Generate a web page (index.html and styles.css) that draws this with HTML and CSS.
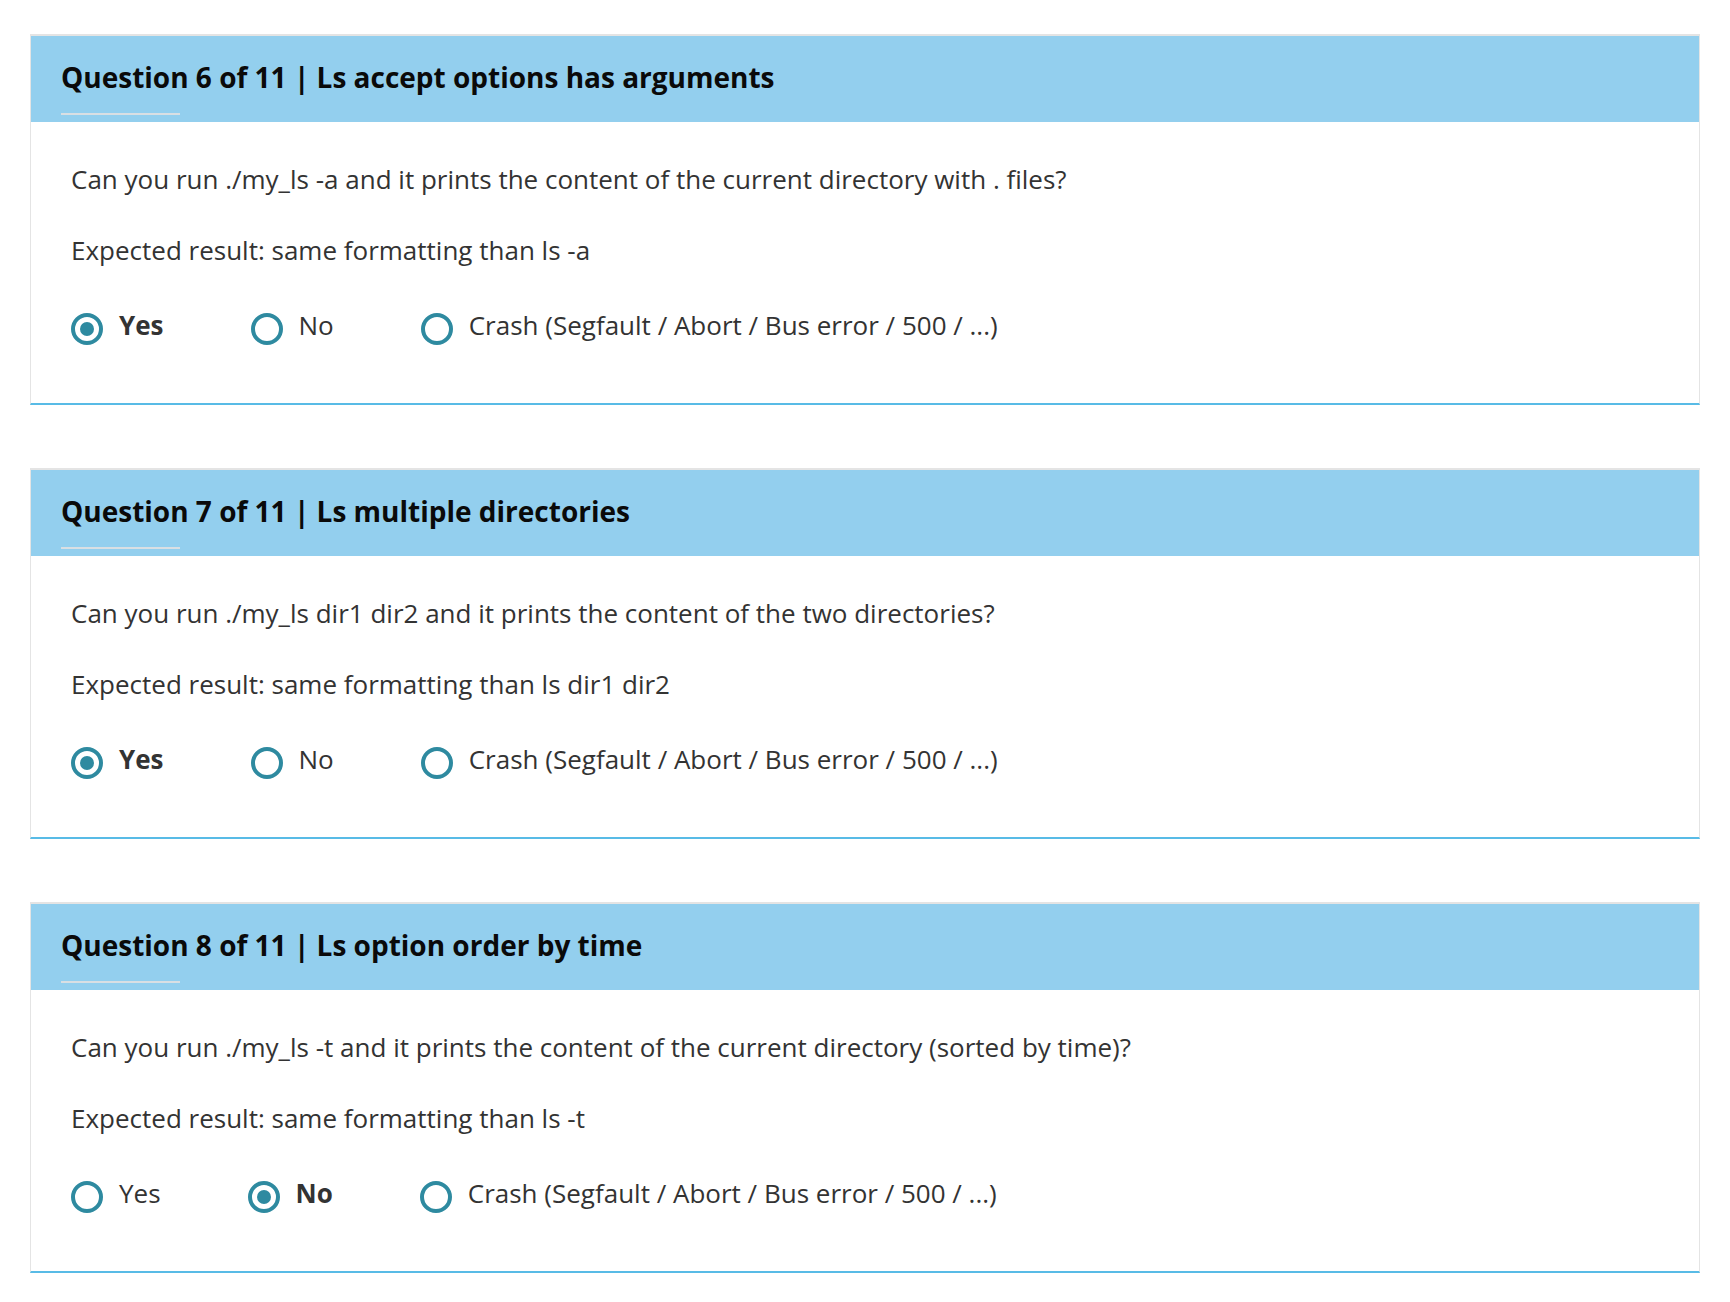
FILE: index.html
```html
<!DOCTYPE html>
<html>
<head>
<meta charset="utf-8">
<link rel="stylesheet" href="styles.css">
</head>
<body>
<div class="page">
  <section class="card">
    <header class="card-head">
      <h2 class="title">Question 6 of 11 | Ls accept options has arguments</h2>
      <div class="title-rule"></div>
    </header>
    <div class="card-body">
      <p class="q">Can you run ./my_ls -a and it prints the content of the current directory with . files?</p>
      <p class="q exp">Expected result: same formatting than ls -a</p>
      <div class="options">
        <label class="opt checked"><span class="radio"><span class="dot"></span></span><span class="lbl">Yes</span></label>
        <label class="opt"><span class="radio"></span><span class="lbl">No</span></label>
        <label class="opt"><span class="radio"></span><span class="lbl">Crash (Segfault / Abort / Bus error / 500 / ...)</span></label>
      </div>
    </div>
  </section>

  <section class="card">
    <header class="card-head">
      <h2 class="title">Question 7 of 11 | Ls multiple directories</h2>
      <div class="title-rule"></div>
    </header>
    <div class="card-body">
      <p class="q">Can you run ./my_ls dir1 dir2 and it prints the content of the two directories?</p>
      <p class="q exp">Expected result: same formatting than ls dir1 dir2</p>
      <div class="options">
        <label class="opt checked"><span class="radio"><span class="dot"></span></span><span class="lbl">Yes</span></label>
        <label class="opt"><span class="radio"></span><span class="lbl">No</span></label>
        <label class="opt"><span class="radio"></span><span class="lbl">Crash (Segfault / Abort / Bus error / 500 / ...)</span></label>
      </div>
    </div>
  </section>

  <section class="card">
    <header class="card-head">
      <h2 class="title">Question 8 of 11 | Ls option order by time</h2>
      <div class="title-rule"></div>
    </header>
    <div class="card-body">
      <p class="q">Can you run ./my_ls -t and it prints the content of the current directory (sorted by time)?</p>
      <p class="q exp">Expected result: same formatting than ls -t</p>
      <div class="options">
        <label class="opt"><span class="radio"></span><span class="lbl">Yes</span></label>
        <label class="opt checked"><span class="radio"><span class="dot"></span></span><span class="lbl">No</span></label>
        <label class="opt"><span class="radio"></span><span class="lbl">Crash (Segfault / Abort / Bus error / 500 / ...)</span></label>
      </div>
    </div>
  </section>
</div>
</body>
</html>
```
FILE: styles.css
```css
html, body {
  margin: 0;
  padding: 0;
  background: #ffffff;
}
body {
  font-family: "Open Sans", "Noto Sans", sans-serif;
  color: #333333;
}
.page {
  padding: 34px 30px 0 30px;
  display: flex;
  flex-direction: column;
  gap: 63px;
}
.card {
  height: 371px;
  box-sizing: border-box;
  border: 1px solid #e4e4e4;
  border-top-width: 2px;
  border-bottom: 2px solid #58bbe6;
  background: #ffffff;
  display: flex;
  flex-direction: column;
}
.card-head {
  background: #93cfee;
  height: 86px;
  box-sizing: border-box;
  padding: 26px 30px 0 30px;
}
.title {
  margin: 0;
  font-size: 28px;
  line-height: 30px;
  font-weight: 700;
  color: #0a0a0a;
}
.title-rule {
  margin-top: 21px;
  width: 119px;
  height: 2px;
  background: #d9dfe3;
}
.card-body {
  padding: 39px 40px 0 40px;
}
.q {
  margin: 0;
  font-size: 26px;
  line-height: 36px;
  color: #333333;
}
.exp {
  margin-top: 35px;
}
.options {
  margin-top: 37px;
  display: flex;
  align-items: center;
}
.opt {
  display: flex;
  align-items: center;
  margin-right: 87px;
  font-size: 26px;
  line-height: 36px;
  color: #333333;
}
.opt.checked .lbl {
  font-weight: 700;
}
.radio {
  width: 32px;
  height: 32px;
  box-sizing: border-box;
  border: 4px solid #2e8aa0;
  border-radius: 50%;
  display: flex;
  align-items: center;
  justify-content: center;
  margin-top: 8px;
  margin-right: 16px;
  flex-shrink: 0;
}
.dot {
  width: 14px;
  height: 14px;
  border-radius: 50%;
  background: #2e8aa0;
}
```
